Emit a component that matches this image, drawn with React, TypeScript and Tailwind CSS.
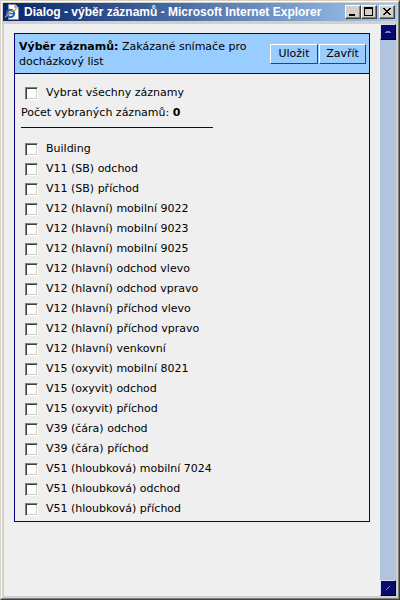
import React from "react";

const items = [
  "Building",
  "V11 (SB) odchod",
  "V11 (SB) příchod",
  "V12 (hlavní) mobilní 9022",
  "V12 (hlavní) mobilní 9023",
  "V12 (hlavní) mobilní 9025",
  "V12 (hlavní) odchod vlevo",
  "V12 (hlavní) odchod vpravo",
  "V12 (hlavní) příchod vlevo",
  "V12 (hlavní) příchod vpravo",
  "V12 (hlavní) venkovní",
  "V15 (oxyvit) mobilní 8021",
  "V15 (oxyvit) odchod",
  "V15 (oxyvit) příchod",
  "V39 (čára) odchod",
  "V39 (čára) příchod",
  "V51 (hloubková) mobilní 7024",
  "V51 (hloubková) odchod",
  "V51 (hloubková) příchod",
];

function CheckBox() {
  return (
    <span className="block w-[13px] h-[13px] shrink-0 bg-white border border-t-[#808080] border-l-[#808080] border-r-white border-b-white shadow-[inset_1px_1px_0_#404040,inset_-1px_-1px_0_#d4d0c8] ml-[4px]" />
  );
}

function Row({ children }: { children: React.ReactNode }) {
  return (
    <div className="h-[20px] flex items-center">
      <CheckBox />
      <span className="ml-[8px] whitespace-nowrap">{children}</span>
    </div>
  );
}

function CaptionButton({ kind }: { kind: "min" | "max" | "close" }) {
  return (
    <div className="w-[16px] h-[14px] bg-[#d4d0c8] border border-t-white border-l-white border-r-[#404040] border-b-[#404040] shadow-[inset_-1px_-1px_0_#808080] flex">
      <svg width="14" height="12" viewBox="0 0 14 12" shapeRendering="crispEdges">
        {kind === "min" && <rect x="3" y="8" width="6" height="2" fill="#000" />}
        {kind === "max" && (
          <g fill="#000">
            <rect x="2" y="1" width="9" height="2" />
            <rect x="2" y="3" width="1" height="7" />
            <rect x="10" y="3" width="1" height="7" />
            <rect x="2" y="9" width="9" height="1" />
          </g>
        )}
        {kind === "close" && (
          <g fill="#000">
            <rect x="3" y="2" width="2" height="1" />
            <rect x="9" y="2" width="2" height="1" />
            <rect x="4" y="3" width="2" height="1" />
            <rect x="8" y="3" width="2" height="1" />
            <rect x="5" y="4" width="4" height="1" />
            <rect x="6" y="5" width="2" height="1" />
            <rect x="5" y="6" width="4" height="1" />
            <rect x="4" y="7" width="2" height="1" />
            <rect x="8" y="7" width="2" height="1" />
            <rect x="3" y="8" width="2" height="1" />
            <rect x="9" y="8" width="2" height="1" />
          </g>
        )}
      </svg>
    </div>
  );
}

function IEIcon() {
  return (
    <svg width="16" height="16" viewBox="0 0 16 16" className="shrink-0">
      <path d="M4.5 0.5 H11 L14.5 4 V15.5 H4.5 Z" fill="#ffffff" stroke="#7f8c99" />
      <path d="M11 0.5 V4 H14.5" fill="#dfe6ee" stroke="#7f8c99" />
      <circle cx="6.5" cy="9.5" r="3.6" fill="none" stroke="#1d64c8" strokeWidth="2.2" />
      <rect x="3.5" y="9" width="6.5" height="1.4" fill="#1d64c8" />
      <path d="M1 13.5 C 3 10, 10 5, 12.5 6" fill="none" stroke="#e0a020" strokeWidth="1.2" />
    </svg>
  );
}

function ScrollButton({ dir }: { dir: "up" | "down" }) {
  return (
    <div className="w-[16px] h-[16px] bg-[#0a0a6e] border border-t-[#d6e2f0] border-l-[#d6e2f0] border-r-black border-b-black flex items-center justify-center">
      <svg width="14" height="14" viewBox="0 0 14 14" shapeRendering="crispEdges">
        {dir === "up" ? (
          <g fill="#7f7fc8">
            <rect x="5" y="6" width="4" height="1" />
            <rect x="4" y="7" width="6" height="1" />
          </g>
        ) : (
          <g fill="#7f7fc8">
            <rect x="8" y="5" width="1" height="1" />
            <rect x="7" y="6" width="1" height="1" />
            <rect x="6" y="7" width="1" height="1" />
            <rect x="5" y="8" width="1" height="1" />
          </g>
        )}
      </svg>
    </div>
  );
}

export default function App() {
  return (
    <div className="w-[400px] h-[600px] bg-[#d4d0c8] border border-t-[#d4d0c8] border-l-[#d4d0c8] border-r-[#404040] border-b-[#404040] flex flex-col">
      <div className="flex-1 flex flex-col border border-t-white border-l-white border-r-[#808080] border-b-[#808080] p-px min-h-0">
        {/* Title bar */}
        <div className="h-[18px] shrink-0 flex items-center bg-gradient-to-r from-[#0a246a] to-[#a6caf0] pl-px pr-[2px]">
          <IEIcon />
          <span className="ml-[4px] text-white font-bold text-[12px] font-['Liberation_Sans',Arial,sans-serif] whitespace-nowrap leading-none">
            Dialog - výběr záznamů - Microsoft Internet Explorer
          </span>
          <div className="ml-auto flex items-center">
            <CaptionButton kind="min" />
            <CaptionButton kind="max" />
            <div className="w-[2px]" />
            <CaptionButton kind="close" />
          </div>
        </div>

        {/* Client area */}
        <div className="flex-1 flex mt-[3px] mx-px mb-px min-h-0">
          <div className="flex-1 bg-[#efefef] pt-[9px] px-[10px] font-['DejaVu_Sans',Verdana,sans-serif] text-[11px] text-black">
            <div className="border border-[#000080]">
              {/* Header */}
              <div className="h-[40px] flex items-center bg-[#99ccff] pl-[4px] pr-[3px] border-b border-[#000080]">
                <div className="flex-1 leading-[15px] pt-px">
                  <span className="font-bold">Výběr záznamů:</span> Zakázané snímače pro
                  <br />
                  docházkový list
                </div>
                <div className="flex gap-px">
                  <button className="w-[48px] h-[20px] bg-[#99ccff] border border-t-white border-l-white border-r-[#404040] border-b-[#404040] text-[11px] leading-none">
                    Uložit
                  </button>
                  <button className="w-[47px] h-[20px] bg-[#99ccff] border border-t-white border-l-white border-r-[#404040] border-b-[#404040] text-[11px] leading-none">
                    Zavřít
                  </button>
                </div>
              </div>

              {/* Body */}
              <div className="pt-[9px] pl-[6px] pb-[2px] leading-[20px]">
                <Row>Vybrat všechny záznamy</Row>
                <div className="h-[20px] whitespace-nowrap">
                  Počet vybraných záznamů: <span className="font-bold">0</span>
                </div>
                <div className="mt-[4px] w-[192px] h-px bg-[#000080]" />
                <div className="mt-[11px]">
                  {items.map((it) => (
                    <Row key={it}>{it}</Row>
                  ))}
                </div>
              </div>
            </div>
          </div>

          {/* Scrollbar */}
          <div className="w-[16px] flex flex-col bg-[#b0c4de]">
            <ScrollButton dir="up" />
            <div className="flex-1" />
            <ScrollButton dir="down" />
          </div>
        </div>
      </div>
    </div>
  );
}
